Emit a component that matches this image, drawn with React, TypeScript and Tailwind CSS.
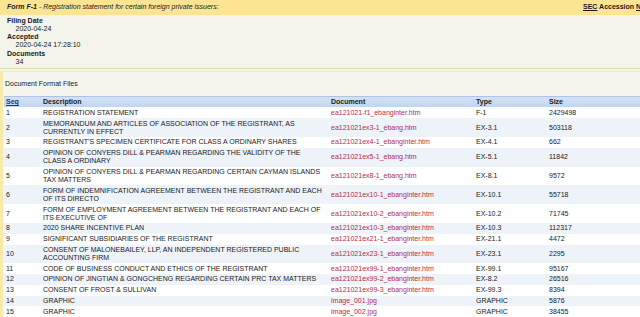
import React from 'react';

type Doc = {
  seq: number;
  lines: string[];
  file: string;
  type: string;
  size: string;
};

const docs: Doc[] = [
  { seq: 1, lines: ['REGISTRATION STATEMENT'], file: 'ea121021-f1_ebanginter.htm', type: 'F-1', size: '2429498' },
  {
    seq: 2,
    lines: ['MEMORANDUM AND ARTICLES OF ASSOCIATION OF THE REGISTRANT, AS', 'CURRENTLY IN EFFECT'],
    file: 'ea121021ex3-1_ebang.htm',
    type: 'EX-3.1',
    size: '503118',
  },
  {
    seq: 3,
    lines: ["REGISTRANT'S SPECIMEN CERTIFICATE FOR CLASS A ORDINARY SHARES"],
    file: 'ea121021ex4-1_ebanginter.htm',
    type: 'EX-4.1',
    size: '662',
  },
  {
    seq: 4,
    lines: ['OPINION OF CONYERS DILL & PEARMAN REGARDING THE VALIDITY OF THE', 'CLASS A ORDINARY'],
    file: 'ea121021ex5-1_ebang.htm',
    type: 'EX-5.1',
    size: '11842',
  },
  {
    seq: 5,
    lines: ['OPINION OF CONYERS DILL & PEARMAN REGARDING CERTAIN CAYMAN ISLANDS', 'TAX MATTERS'],
    file: 'ea121021ex8-1_ebang.htm',
    type: 'EX-8.1',
    size: '9572',
  },
  {
    seq: 6,
    lines: ['FORM OF INDEMNIFICATION AGREEMENT BETWEEN THE REGISTRANT AND EACH', 'OF ITS DIRECTO'],
    file: 'ea121021ex10-1_ebanginter.htm',
    type: 'EX-10.1',
    size: '55718',
  },
  {
    seq: 7,
    lines: ['FORM OF EMPLOYMENT AGREEMENT BETWEEN THE REGISTRANT AND EACH OF', 'ITS EXECUTIVE OF'],
    file: 'ea121021ex10-2_ebanginter.htm',
    type: 'EX-10.2',
    size: '71745',
  },
  { seq: 8, lines: ['2020 SHARE INCENTIVE PLAN'], file: 'ea121021ex10-3_ebanginter.htm', type: 'EX-10.3', size: '112317' },
  {
    seq: 9,
    lines: ['SIGNIFICANT SUBSIDIARIES OF THE REGISTRANT'],
    file: 'ea121021ex21-1_ebanginter.htm',
    type: 'EX-21.1',
    size: '4472',
  },
  {
    seq: 10,
    lines: ['CONSENT OF MALONEBAILEY, LLP, AN INDEPENDENT REGISTERED PUBLIC', 'ACCOUNTING FIRM'],
    file: 'ea121021ex23-1_ebanginter.htm',
    type: 'EX-23.1',
    size: '2295',
  },
  {
    seq: 11,
    lines: ['CODE OF BUSINESS CONDUCT AND ETHICS OF THE REGISTRANT'],
    file: 'ea121021ex99-1_ebanginter.htm',
    type: 'EX-99.1',
    size: '95167',
  },
  {
    seq: 12,
    lines: ['OPINION OF JINGTIAN & GONGCHENG REGARDING CERTAIN PRC TAX MATTERS'],
    file: 'ea121021ex99-2_ebanginter.htm',
    type: 'EX-8.2',
    size: '26516',
  },
  { seq: 13, lines: ['CONSENT OF FROST & SULLIVAN'], file: 'ea121021ex99-3_ebanginter.htm', type: 'EX-99.3', size: '8394' },
  { seq: 14, lines: ['GRAPHIC'], file: 'image_001.jpg', type: 'GRAPHIC', size: '5876' },
  { seq: 15, lines: ['GRAPHIC'], file: 'image_002.jpg', type: 'GRAPHIC', size: '38455' },
];

function InfoItem({ label, value }: { label: string; value: string }) {
  return (
    <>
      <div className="font-bold">{label}</div>
      <div className="pl-[8.5px]">{value}</div>
    </>
  );
}

export default function App() {
  return (
    <div className="h-[317px] w-[640px] overflow-hidden bg-[#f5f4ea] font-['Liberation_Sans',Arial,sans-serif] text-[7px] text-[#1a1a1a]">
      {/* form heading bar */}
      <div className="flex h-[15px] items-center whitespace-nowrap bg-[#fde493] pl-[7px]">
        <div className="flex-1 italic">
          <span className="font-bold">Form F-1</span> - Registration statement for certain foreign private issuers:
        </div>
        <div className="w-[57px] overflow-hidden font-bold">
          <span className="underline">SEC</span> Accession <span className="underline">No.</span> 0001213900-20-010475
        </div>
      </div>

      <div className="border-b border-[#e6dcaa] px-[7px] pt-[1.5px] pb-[2px] leading-[8.3px]">
        <InfoItem label="Filing Date" value="2020-04-24" />
        <InfoItem label="Accepted" value="2020-04-24 17:28:10" />
        <InfoItem label="Documents" value="34" />
      </div>

      <div className="mt-[2px] border-t border-l-[3px] border-[#f8eaa9] bg-[#f6f5ed] pl-[1px]">
        <div className="pt-[8px] pl-[1px] leading-[8px]">Document Format Files</div>

        <table className="mt-[7.7px] w-[660px] table-fixed border-collapse whitespace-nowrap leading-[8px]">
          <colgroup>
            <col className="w-[37px]" />
            <col className="w-[288px]" />
            <col className="w-[145px]" />
            <col className="w-[73px]" />
            <col />
          </colgroup>
          <thead>
            <tr className="h-[11px] border-t border-[#aec4e6] bg-gradient-to-b from-[#d3e1f5] to-[#c2d5f0] text-left font-bold">
              <th className="px-[2px] text-[#1b3a73] underline">Seq</th>
              <th className="px-[2px]">Description</th>
              <th className="px-[2px]">Document</th>
              <th className="px-[2px]">Type</th>
              <th className="px-[2px]">Size</th>
            </tr>
          </thead>
          <tbody>
            {docs.map((d) => (
              <tr key={d.seq} className={d.seq % 2 === 0 ? 'bg-[#eef2f9]' : 'bg-white'}>
                <td className="px-[2px] py-[1.4px] align-middle">{d.seq}</td>
                <td className="overflow-visible px-[2px] py-[1.4px] align-middle">
                  {d.lines.map((l, i) => (
                    <div key={i}>{l}</div>
                  ))}
                </td>
                <td className="px-[2px] py-[1.4px] align-middle text-[#b42c4c]">{d.file}</td>
                <td className="px-[2px] py-[1.4px] align-middle">{d.type}</td>
                <td className="px-[2px] py-[1.4px] align-middle">{d.size}</td>
              </tr>
            ))}
          </tbody>
        </table>
      </div>
    </div>
  );
}
